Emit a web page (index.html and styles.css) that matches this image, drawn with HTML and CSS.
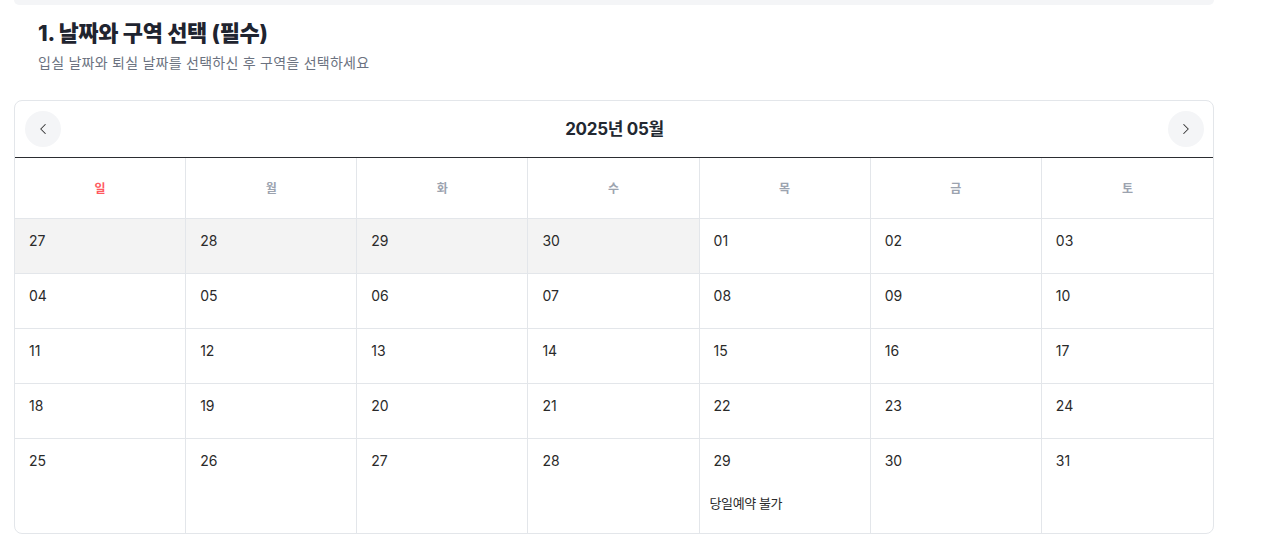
FILE: index.html
```html
<!DOCTYPE html>
<html lang="ko">
<head>
<meta charset="utf-8">
<link rel="stylesheet" href="styles.css">
</head>
<body>
<div class="page">
  <div class="topbar"></div>
  <div class="section-head">
    <h2 class="title">1. 날짜와 구역 선택 (필수)</h2>
    <p class="subtitle">입실 날짜와 퇴실 날짜를 선택하신 후 구역을 선택하세요</p>
  </div>
  <div class="calendar">
    <div class="cal-head">
      <button class="nav-btn" aria-label="이전 달">
        <svg width="18" height="18" viewBox="0 0 24 24" fill="none" stroke="#333" stroke-width="1.4" stroke-linecap="round" stroke-linejoin="round"><path d="M15 18l-6-6 6-6"/></svg>
      </button>
      <div class="month">2025년 05월</div>
      <button class="nav-btn" aria-label="다음 달">
        <svg width="18" height="18" viewBox="0 0 24 24" fill="none" stroke="#333" stroke-width="1.4" stroke-linecap="round" stroke-linejoin="round"><path d="M9 18l6-6-6-6"/></svg>
      </button>
    </div>
    <div class="grid">
      <div class="dow sun">일</div>
      <div class="dow">월</div>
      <div class="dow">화</div>
      <div class="dow">수</div>
      <div class="dow">목</div>
      <div class="dow">금</div>
      <div class="dow last">토</div>

      <div class="day other"><span class="num">27</span></div>
      <div class="day other"><span class="num">28</span></div>
      <div class="day other"><span class="num">29</span></div>
      <div class="day other"><span class="num">30</span></div>
      <div class="day"><span class="num">01</span></div>
      <div class="day"><span class="num">02</span></div>
      <div class="day last"><span class="num">03</span></div>

      <div class="day"><span class="num">04</span></div>
      <div class="day"><span class="num">05</span></div>
      <div class="day"><span class="num">06</span></div>
      <div class="day"><span class="num">07</span></div>
      <div class="day"><span class="num">08</span></div>
      <div class="day"><span class="num">09</span></div>
      <div class="day last"><span class="num">10</span></div>

      <div class="day"><span class="num">11</span></div>
      <div class="day"><span class="num">12</span></div>
      <div class="day"><span class="num">13</span></div>
      <div class="day"><span class="num">14</span></div>
      <div class="day"><span class="num">15</span></div>
      <div class="day"><span class="num">16</span></div>
      <div class="day last"><span class="num">17</span></div>

      <div class="day"><span class="num">18</span></div>
      <div class="day"><span class="num">19</span></div>
      <div class="day"><span class="num">20</span></div>
      <div class="day"><span class="num">21</span></div>
      <div class="day"><span class="num">22</span></div>
      <div class="day"><span class="num">23</span></div>
      <div class="day last"><span class="num">24</span></div>

      <div class="day tall bottom"><span class="num">25</span></div>
      <div class="day tall bottom"><span class="num">26</span></div>
      <div class="day tall bottom"><span class="num">27</span></div>
      <div class="day tall bottom"><span class="num">28</span></div>
      <div class="day tall bottom"><span class="num">29</span><span class="note">당일예약 불가</span></div>
      <div class="day tall bottom"><span class="num">30</span></div>
      <div class="day tall bottom last"><span class="num">31</span></div>
    </div>
  </div>
</div>
</body>
</html>
```

FILE: styles.css
```css
* { box-sizing: border-box; }

body {
  margin: 0;
  background: #fff;
  font-family: Inter, "Noto Sans CJK KR", sans-serif;
  color: #333;
}

.page {
  width: 1200px;
  margin-left: 14px;
}

.topbar {
  height: 5px;
  background: #f4f5f7;
  border-radius: 0 0 8px 8px;
}

.section-head {
  padding: 13px 24px 0;
}

.title {
  margin: 0;
  font-size: 22px;
  line-height: 30px;
  font-weight: 800;
  color: #1f2430;
  letter-spacing: -0.3px;
}

.subtitle {
  margin: 5px 0 0;
  font-size: 14px;
  line-height: 20px;
  color: #6b7280;
  letter-spacing: 0.25px;
}

.calendar {
  margin-top: 27px;
  border: 1px solid #e3e6ea;
  border-radius: 8px;
  overflow: hidden;
}

.cal-head {
  display: flex;
  align-items: center;
  justify-content: space-between;
  height: 57px;
  padding: 0 9px 0 10px;
  border-bottom: 1px solid #2b2d31;
}

.nav-btn {
  width: 36px;
  height: 36px;
  border: 0;
  border-radius: 50%;
  background: #f4f5f7;
  display: flex;
  align-items: center;
  justify-content: center;
  padding: 0;
}

.month {
  padding-bottom: 3px;
  font-size: 17px;
  font-weight: 700;
  color: #222831;
  letter-spacing: -0.3px;
}

.grid {
  display: grid;
  grid-template-columns: repeat(7, 1fr);
}

.dow {
  height: 61px;
  padding-bottom: 2px;
  display: flex;
  align-items: center;
  justify-content: center;
  font-size: 12px;
  font-weight: 600;
  color: #9ca3af;
  border-right: 1px solid #e3e6ea;
  border-bottom: 1px solid #e3e6ea;
}

.dow.sun { color: #ff5a5f; }

.dow.last { border-right: 0; }

.day {
  height: 55px;
  padding: 12px 10px 0 14px;
  border-right: 1px solid #e3e6ea;
  border-bottom: 1px solid #e3e6ea;
  display: flex;
  flex-direction: column;
  align-items: flex-start;
}

.day.other { background: #f3f3f3; }

.day.last { border-right: 0; }

.day.tall { height: 94px; }

.day.bottom { border-bottom: 0; }

.num {
  font-size: 14px;
  line-height: 20px;
  color: #2a2a2a;
}

.note {
  margin-top: 22px;
  margin-left: -4px;
  font-size: 13px;
  line-height: 20px;
  color: #2a2a2a;
  letter-spacing: -0.4px;
}
```
